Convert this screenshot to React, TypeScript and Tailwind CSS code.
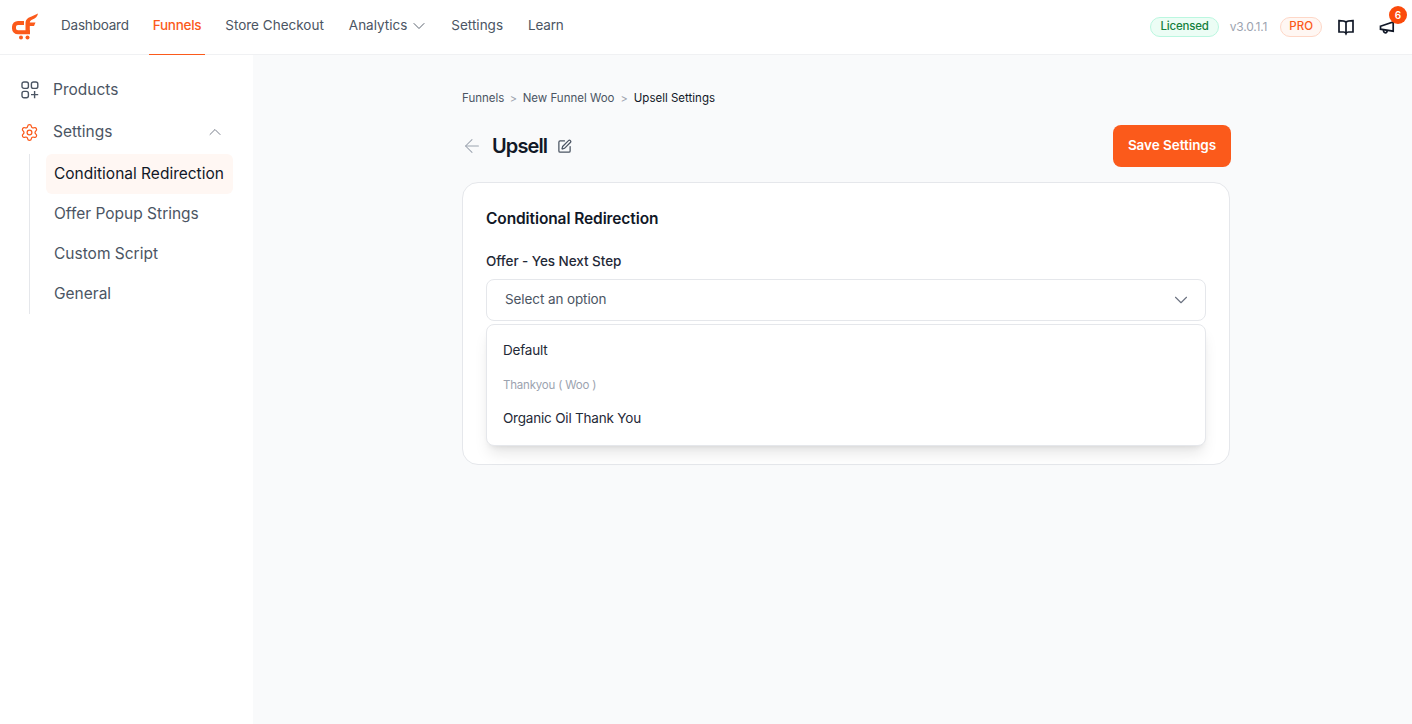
import { ArrowLeft, ChevronDown, ChevronUp, Settings, SquarePen } from "lucide-react";

const font = { fontFamily: "Inter, 'Noto Sans', sans-serif" };

function Logo() {
  return (
    <svg width="28" height="28" viewBox="0 0 28 28" fill="none">
      <path d="M13 11H7C4.8 11 3 12.6 3 14.8V16.5C3 18.7 4.8 20.3 7 20.3H19" stroke="#fb5a1b" strokeWidth="4" />
      <path d="M14.5 22V11.5C14.5 7.5 17 5.5 20.5 4.5L27 1.5C26.5 4.5 24.5 6.5 21.5 7.5C20 8 18.8 9 18.8 10.5H24.5L23 14H18.8V22Z" fill="#fb5a1b" />
      <circle cx="10" cy="25.5" r="2" fill="#fb5a1b" />
      <circle cx="16.5" cy="25.5" r="2" fill="#fb5a1b" />
    </svg>
  );
}

function ProductsIcon() {
  return (
    <svg width="18" height="18" viewBox="0 0 18 18" fill="none" stroke="#4b5563" strokeWidth="1.4">
      <rect x="1" y="1" width="6.4" height="6.4" rx="2" />
      <rect x="10.4" y="1" width="6.4" height="6.4" rx="2" />
      <rect x="1" y="10.4" width="6.4" height="6.4" rx="2" />
      <path d="M13.6 10V17.2M10 13.6H17.2" />
    </svg>
  );
}

function BookIcon() {
  return (
    <svg width="18" height="18" viewBox="0 0 18 18" fill="none" stroke="#111827" strokeWidth="1.7" className="mr-[24px]">
      <path d="M9 4.2C7.8 2.9 6 2.6 2 2.6V14H6.5C7.7 14 8.6 14.4 9 15.4C9.4 14.4 10.3 14 11.5 14H16V2.6C12 2.6 10.2 2.9 9 4.2ZM9 4.2V16.5" />
    </svg>
  );
}

function HornIcon() {
  return (
    <svg width="16" height="16" viewBox="0 0 16 16" fill="none" stroke="#111827" strokeWidth="1.7">
      <path d="M1.5 7.2L14.2 3V12.2L1.5 10.2Z" />
      <path d="M4.5 10.6C4.3 12.8 5.2 13.8 6.4 13.8C7.6 13.8 8.2 13 8.2 11.2" />
    </svg>
  );
}

export default function App() {
  return (
    <div style={font} className="flex h-[724px] w-full flex-col overflow-hidden bg-[#f9fafb] text-[#111827]">
      <header className="flex h-[55px] shrink-0 items-center justify-between border-b border-[#f0f1f3] bg-white pl-[11px] pr-[17px]">
        <div className="flex h-full items-center">
          <div className="mr-[18px] -mt-[3px] flex h-7 w-7 items-center"><Logo /></div>
          <nav className="flex h-full items-center gap-4 text-[13.5px] tracking-[-0.2px] text-[#4b5563]">
            <a className="mb-[3px] px-1">Dashboard</a>
            <a className="-mb-[1px] flex h-full items-center border-b border-[#fb5a1b] px-1 pb-[3px] font-medium tracking-[-0.3px] text-[#fb5a1b]">Funnels</a>
            <a className="mb-[3px] px-1 tracking-[0px]">Store Checkout</a>
            <a className="mb-[3px] ml-[1px] flex items-center gap-[2px] px-1 tracking-[0px]">Analytics <ChevronDown size={20} strokeWidth={1.1} /></a>
            <a className="mb-[3px] -ml-[2px] px-1 tracking-[0px]">Settings</a>
            <a className="mb-[3px] ml-[1px] px-1 tracking-[-0.2px]">Learn</a>
          </nav>
        </div>
        <div className="flex items-center">
          <div className="-mt-[1px] flex items-center">
            <span className="mr-[11px] flex h-5 items-center rounded-full border border-[#bbf7e0] bg-[#ecfdf5] px-[9px] text-[11.5px] font-medium tracking-[-0.2px] text-[#15803d]">Licensed</span>
            <span className="mr-[13px] text-xs tracking-[-0.15px] text-[#9ca3af]">v3.0.1.1</span>
            <span className="mr-[15px] flex h-5 items-center rounded-full border border-[#fed7c7] bg-[#fff7f3] px-2 text-[11.5px] font-medium text-[#fb5a1b]">PRO</span>
          </div>
          <BookIcon />
          <div className="relative">
            <HornIcon />
            <span className="absolute -right-[12px] -top-[13px] flex h-[18px] w-[18px] items-center justify-center rounded-full bg-[#fb4a0b] text-[10px] font-semibold text-white">6</span>
          </div>
        </div>
      </header>
      <div className="flex flex-1">
        <aside className="w-[253px] shrink-0 bg-white pl-[21px] pr-5 pt-[25px] text-[15.5px] text-[#4b5563]">
          <div className="flex h-5 items-center gap-[14px]"><ProductsIcon /><span>Products</span></div>
          <div className="mt-[22px] flex h-5 items-center gap-[14px]">
            <Settings size={19} strokeWidth={1.6} className="-ml-[1px] text-[#fb5a1b]" />
            <span>Settings</span>
            <ChevronUp size={20} strokeWidth={1.1} className="ml-auto mr-[8px] text-[#6b7280]" />
          </div>
          <div className="ml-[8px] mt-[12px] flex h-[160px] flex-col border-l border-[#e5e7eb] pl-[16px]">
            <div className="flex h-10 shrink-0 items-center rounded-md bg-[#fff7f3] pl-2 text-[#111827]">Conditional Redirection</div>
            <div className="flex h-10 shrink-0 items-center pl-2">Offer Popup Strings</div>
            <div className="flex h-10 shrink-0 items-center pl-2">Custom Script</div>
            <div className="flex h-10 shrink-0 items-center pl-2">General</div>
          </div>
        </aside>
        <main className="flex-1 pl-[209px] pt-[36px]">
          <div className="w-[768px]">
            <div className="flex h-[16px] items-center text-[11.5px] tracking-[0px]">
              <span className="text-[#4b5563]">Funnels</span>
              <span className="mx-[5.5px] text-[11px] text-[#9ca3af]">&gt;</span>
              <span className="text-[#4b5563]">New Funnel Woo</span>
              <span className="mx-[6px] text-[11px] text-[#9ca3af]">&gt;</span>
              <span className="text-[#111827]">Upsell Settings</span>
            </div>
            <div className="mt-[18px] flex h-[42px] items-center justify-between">
              <div className="flex items-center">
                <ArrowLeft size={22} strokeWidth={1.1} className="-ml-[1px] text-[#9ca3af]" />
                <h1 className="ml-[9px] text-xl font-semibold tracking-[-0.9px]">Upsell</h1>
                <SquarePen size={15} strokeWidth={2} className="ml-[10px] text-[#4b5563]" />
              </div>
              <button className="mr-[-1px] flex h-[42px] w-[118px] items-center justify-center rounded-lg bg-[#fb5a1b] pb-[1px] text-[13.5px] font-semibold tracking-[-0.05px] text-white">Save Settings</button>
            </div>
            <section className="mt-[15px] h-[283px] rounded-2xl border border-[#e5e7eb] bg-white px-[23px] pt-[26px]">
              <h2 className="text-[15.5px] font-semibold leading-5 tracking-[-0.1px]">Conditional Redirection</h2>
              <div className="mt-[22px] text-[13.5px] font-medium leading-5 tracking-[-0.06px] text-[#1f2937]">Offer - Yes Next Step</div>
              <div className="relative mt-2">
                <div className="flex h-[42px] items-center justify-between rounded-lg border border-[#e5e7eb] bg-white pl-[18px] pr-[13px] text-[13.5px] tracking-[-0.1px] text-[#4b5563]">
                  <span className="-mt-[1px]">Select an option</span>
                  <ChevronDown size={22} strokeWidth={1.2} className="text-[#6b7280]" />
                </div>
                <div className="absolute left-0 right-0 top-[45px] h-[122px] rounded-lg border border-[#e5e7eb] bg-white px-4 pt-[15px] text-[13.5px] tracking-[-0.2px] text-[#1f2937] shadow-lg">
                  <div className="leading-5">Default</div>
                  <div className="mt-[15px] text-[11.5px] leading-5 text-[#9ca3af]">Thankyou ( Woo )</div>
                  <div className="mt-[13px] leading-5">Organic Oil Thank You</div>
                </div>
              </div>
            </section>
          </div>
        </main>
      </div>
    </div>
  );
}
